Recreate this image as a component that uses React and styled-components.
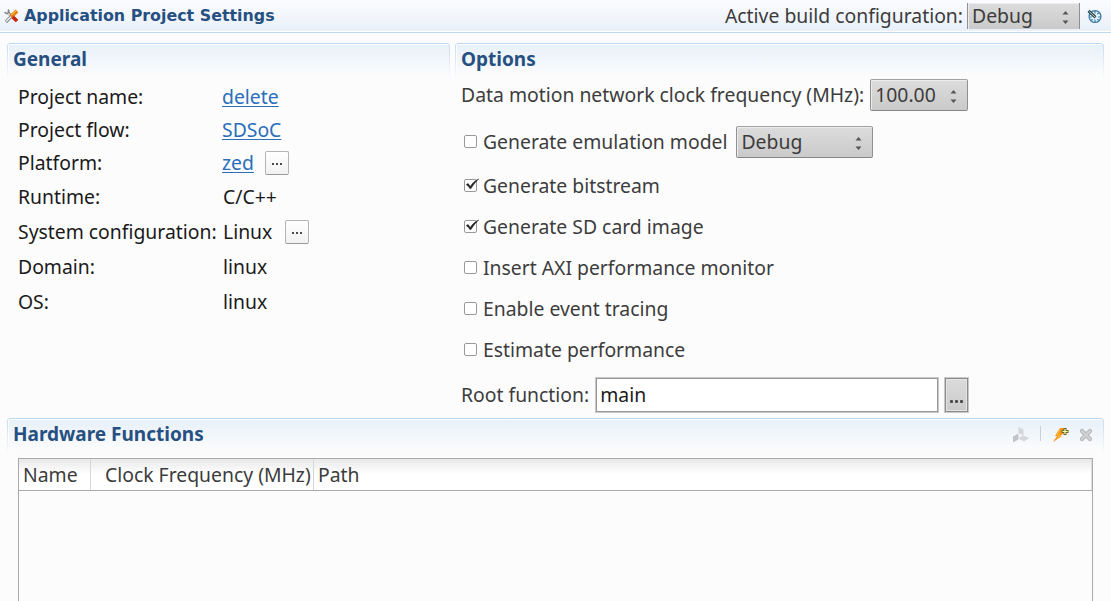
import React from "react";
import styled, { createGlobalStyle } from "styled-components";

const Global = createGlobalStyle`
  * { box-sizing: border-box; }
  body {
    margin: 0;
    background: #fcfcfc;
    color: #1a1a1a;
    font: 19.36px/28px "Noto Sans", sans-serif;
    white-space: nowrap;
    overflow: hidden;
  }
`;

const Page = styled.div`
  display: flex;
  flex-direction: column;
  width: 1111px;
  height: 601px;
  overflow: hidden;
`;

const Header = styled.header`
  display: flex;
  flex: none;
  align-items: flex-start;
  height: 33px;
  padding: 0 9px 0 4px;
  background: linear-gradient(#fbfcfe, #e9f0f9 31px, #fff 31px, #fff 32px);
  border-bottom: 1px solid #bcd6f3;
`;

const ToolsIcon = styled.svg`
  width: 16px;
  height: 16px;
  margin-top: 8px;
`;

const Title = styled.h1`
  margin: 3px auto 0 4px;
  font: bold 15.86px/26px "DejaVu Sans", sans-serif;
  color: #265081;
`;

const HeaderLabel = styled.span`
  margin: 2px 4px 0 0;
  color: #3c3c3c;
`;

const GaugeIcon = styled.svg`
  width: 15px;
  height: 15px;
  margin: 9px 0 0 7px;
`;

const Columns = styled.div`
  display: grid;
  flex: none;
  grid-template-columns: 443px 649px;
  column-gap: 5px;
  height: 375px;
  margin: 10px 0 0 7px;
`;

const Section = styled.section`
  display: flex;
  flex: none;
  flex-direction: column;
  width: ${(p) => p.$width || "auto"};
  margin-left: ${(p) => p.$indent || "0"};
  border-radius: 4px 4px 0 0;
  border-top: 1px solid #bbd8f2;
  background:
    linear-gradient(#c5dcf2, #fcfcfc) left top / 1px 36px no-repeat,
    linear-gradient(#c5dcf2, #fcfcfc) right top / 1px 36px no-repeat,
    linear-gradient(#fff, #fff) left top / 100% 1px no-repeat,
    linear-gradient(#fff, #fcfcfc) 1px top / 1px 36px no-repeat,
    linear-gradient(#e7f0f9, #fcfcfc) left top / 100% 32px no-repeat;
`;

const SectionHead = styled.div`
  display: flex;
  align-items: flex-start;
  height: ${(p) => p.$height}px;
  padding: 1px 10px 0 6px;
`;

const SectionTitle = styled.h2`
  margin: 0 auto 0 0;
  font: bold 19px/28px "Noto Sans", sans-serif;
  color: #265081;
`;

const Fields = styled.dl`
  display: grid;
  grid-template-columns: 205px auto;
  grid-template-rows: 33px 33px 34px 34px 35px 35px 35px;
  align-items: center;
  margin: 0 0 0 11px;
`;

const Term = styled.dt`
  margin: 0;
`;

const Value = styled.dd`
  display: flex;
  align-items: center;
  gap: ${(p) => p.$gap || 11}px;
  margin: 0;
`;

const Link = styled.a`
  margin-left: -1px;
  color: #2a6ebb;
  text-decoration: underline;
  text-decoration-thickness: 1px;
  text-underline-offset: 2px;
  text-decoration-skip-ink: none;
`;

const MoreButton = styled.button`
  display: flex;
  align-items: center;
  justify-content: center;
  gap: 2px;
  width: 24px;
  height: 24px;
  padding: 2px 0 0;
  border: 1px solid #b4b4b4;
  border-bottom-color: #999;
  border-radius: 2px;
  background: linear-gradient(#fff, #f1f1f1);
`;

const Dot = styled.i`
  width: 2px;
  height: 2px;
  background: #4c4a46;
`;

const OptionList = styled.div`
  display: flex;
  flex-direction: column;
  color: #3c3c3c;
`;

const OptionRow = styled.div`
  display: flex;
  align-items: center;
  height: ${(p) => p.$height || 41}px;
  padding: ${(p) => p.$top || 0}px 0 0 ${(p) => p.$indent || 9}px;
`;

const Box = styled.span`
  width: 13px;
  height: 13px;
  margin: 0 6px 1px 0;
  border: 1px solid #999;
  border-radius: 2px;
  background: #fff;

  svg {
    display: block;
    width: 15px;
    height: 13px;
    margin: -1px 0 0 0;
    overflow: visible;
  }
`;

const Combo = styled.div`
  display: flex;
  align-items: center;
  justify-content: space-between;
  width: ${(p) => p.$width}px;
  height: 32px;
  margin-left: ${(p) => p.$left || 0}px;
  padding: 0 10px 0 4px;
  border: 1px solid #8f8f8f;
  border-color: #a2a2a2 #909090 #858585;
  border-radius: 2px;
  box-shadow: inset 1px 1px 0 #ececec;
  background: linear-gradient(#dcdcdc, #cacaca);
  color: #3c3c3c;

  svg {
    width: 7px;
    height: 13px;
    margin-top: 3px;
  }
`;

const HeaderCombo = styled(Combo)`
  height: 26px;
  margin-top: 3px;
  border-width: 0 1px;
  border-radius: 0;
`;

const TextField = styled.div`
  display: flex;
  align-items: center;
  width: 344px;
  height: 36px;
  margin: 0 5px 0 6px;
  padding-left: 4px;
  border: 1px solid #c9c9c9;
  background: #fff;
  box-shadow: inset 0 0 0 1px #979797;
  color: #1a1a1a;
`;

const BrowseButton = styled.div`
  display: flex;
  align-items: flex-end;
  justify-content: center;
  gap: 2px;
  width: 25px;
  height: 36px;
  padding-bottom: 9px;
  border: 1px solid #c9c9c9;
  background: linear-gradient(#dcdcdc, #cacaca);
  box-shadow: inset 0 0 0 1px #8c8c8c, inset 0 0 0 2px #e4e4e4;

  i {
    width: 3px;
    height: 3px;
    border-radius: 1px;
  }
`;

const ActionIcon = styled.svg`
  width: 16px;
  height: 16px;
  margin: 7px 0 0 ${(p) => p.$left || 0}px;
`;

const Separator = styled.span`
  width: 1px;
  height: 15px;
  margin: 6px 0 0 11px;
  background: #cbd0d5;
`;

const Table = styled.div`
  width: 1075px;
  height: 150px;
  margin-left: 11px;
  border: 1px solid #aaa;
  border-bottom: 0;
`;

const TableHead = styled.div`
  display: grid;
  grid-template-columns: 72px 223px 1fr;
  height: 32px;
  border-bottom: 1px solid #aaa;
  background: linear-gradient(#e8e8e8, #fff 15px, #fff);
  box-shadow: inset -1px 0 #ddd;
  color: #3c3c3c;
`;

const HeadCell = styled.div`
  padding: 2px 0 0 ${(p) => p.$pad}px;
  border-right: ${(p) => (p.$last ? "0" : "1px solid #d6d6d6")};
`;

const Arrows = () => (
  <svg viewBox="0 0 7 13" fill="#555">
    <path d="M.5 3.5 3.5 0l3 3.5zM.5 9.5h6l-3 3.5z" />
  </svg>
);

const Dots = () => (
  <>
    <Dot />
    <Dot />
    <Dot />
  </>
);

const Check = ({ on }) => (
  <Box>
    {on && (
      <svg viewBox="0 0 15 13">
        <path d="M1.2 5.5 3.2 4.6 5.3 7.4C7.8 3.6 10.2 1.4 13.8 0 10.8 2.6 8 6 6 9.6H4.8C3.8 7.8 2.8 6.7 1.2 5.5z" fill="#222" stroke="#222" strokeWidth=".5" />
      </svg>
    )}
  </Box>
);

const options = [
  ["Generate bitstream", true],
  ["Generate SD card image", true],
  ["Insert AXI performance monitor", false],
  ["Enable event tracing", false],
  ["Estimate performance", false],
];

export default function App() {
  return (
    <Page>
      <Global />
      <Header>
        <ToolsIcon viewBox="0 0 16 16" fill="none">
          <path d="M3 4 13 13" stroke="#777" strokeWidth="3" />
          <path d="M2.5 4 13 13.4" stroke="#e8e8e8" strokeWidth="1.6" />
          <path d="M4 1.5q2 2 0 3.5T.8 4" stroke="#858585" strokeWidth="1.5" />
          <path d="M2 14 7.5 8" stroke="#777" strokeWidth="3.2" />
          <path d="M2.2 13.6 7 8.5" stroke="#f2f2f2" strokeWidth="1.5" />
          <path d="M7 8.5 13 3" stroke="#e57a0c" strokeWidth="3.8" />
          <path d="M7.5 7 12.3 2.6" stroke="#ffb74a" strokeWidth="1.2" />
          <path d="M8.8 9 13 13" stroke="#ca2415" strokeWidth="3.6" />
        </ToolsIcon>
        <Title>Application Project Settings</Title>
        <HeaderLabel>Active build configuration:</HeaderLabel>
        <HeaderCombo $width={113}>
          Debug
          <Arrows />
        </HeaderCombo>
        <GaugeIcon viewBox="0 0 15 15" fill="none">
          <circle cx="8" cy="7.5" r="5.9" fill="#e9f4fb" stroke="#397ca5" strokeWidth="1.3" />
          <path d="M8 2v2.4M8 10.5V13M2.5 8h2.4M11 8h2.5M4.2 11.5l1.4-1.4M10.3 5.2l1.4-1.4M11.7 11.5l-1.4-1.4" stroke="#397ca5" strokeWidth="1.2" />
          <path d="M1.5 1.8 8.5 8.3" stroke="#234a63" strokeWidth="3" />
          <path d="M2.2 2.5 8 8" stroke="#d8c98c" />
        </GaugeIcon>
      </Header>

      <Columns>
        <Section>
          <SectionHead $height={36}>
            <SectionTitle>General</SectionTitle>
          </SectionHead>
          <Fields>
            <Term>Project name:</Term>
            <Value><Link>delete</Link></Value>
            <Term>Project flow:</Term>
            <Value><Link>SDSoC</Link></Value>
            <Term>Platform:</Term>
            <Value><Link>zed</Link><MoreButton><Dots /></MoreButton></Value>
            <Term>Runtime:</Term>
            <Value>C/C++</Value>
            <Term>System configuration:</Term>
            <Value $gap={13}>Linux<MoreButton><Dots /></MoreButton></Value>
            <Term>Domain:</Term>
            <Value>linux</Value>
            <Term>OS:</Term>
            <Value>linux</Value>
          </Fields>
        </Section>

        <Section>
          <SectionHead $height={27}>
            <SectionTitle>Options</SectionTitle>
          </SectionHead>
          <OptionList>
            <OptionRow $height={48} $indent={6}>
              Data motion network clock frequency (MHz):
              <Combo $width={98} $left={6}>
                100.00
                <Arrows />
              </Combo>
            </OptionRow>
            <OptionRow $height={46}>
              <Check />
              Generate emulation model
              <Combo $width={137} $left={9}>
                Debug
                <Arrows />
              </Combo>
            </OptionRow>
            {options.map(([label, on]) => (
              <OptionRow key={label}>
                <Check on={on} />
                {label}
              </OptionRow>
            ))}
            <OptionRow $height={48} $top={2} $indent={6}>
              Root function:
              <TextField>main</TextField>
              <BrowseButton><Dots /></BrowseButton>
            </OptionRow>
          </OptionList>
        </Section>
      </Columns>

      <Section $width="1097px" $indent="7px">
        <SectionHead $height={39}>
          <SectionTitle>Hardware Functions</SectionTitle>
          <ActionIcon viewBox="0 0 16 16">
            <path d="M5.5 0 10.5 2.5v6L5.5 6z" fill="#d3d7da" />
            <path d="M0 9.5 5.5 6.5v6L0 15.5z" fill="#c2c5c8" />
            <path d="M5.5 11.5 10 8.5l6 2.5-5 3.5z" fill="#d3d7da" />
          </ActionIcon>
          <Separator />
          <ActionIcon $left={12} viewBox="0 0 16 16">
            <path d="M7 1h5L9.5 5H12L7.5 9H9L0 15 4 9H2z" fill="#f7941d" />
            <path d="M7 3 4 8h3L4 12" fill="none" stroke="#ffc13d" />
            <path d="M10.5 1h3v2h2v3h-2v2h-3V6h-2V3h2z" fill="#6d6819" />
            <path d="M12 2v5M9.5 4.5h5" stroke="#ffffb8" strokeWidth="1.2" />
          </ActionIcon>
          <ActionIcon $left={9} viewBox="0 0 16 16">
            <path d="M4 4 12 12M12 4 4 12" stroke="#b3b5b8" strokeWidth="4.2" strokeLinecap="round" />
            <path d="M4 4 12 12M12 4 4 12" stroke="#d0d1d3" strokeWidth="2.4" strokeLinecap="round" />
          </ActionIcon>
        </SectionHead>
        <Table>
          <TableHead>
            <HeadCell $pad={4}>Name</HeadCell>
            <HeadCell $pad={14}>Clock Frequency (MHz)</HeadCell>
            <HeadCell $pad={4} $last>Path</HeadCell>
          </TableHead>
        </Table>
      </Section>
    </Page>
  );
}
